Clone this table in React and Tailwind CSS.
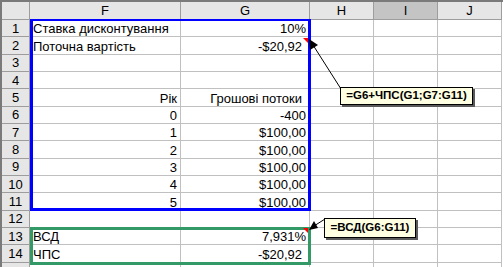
import React from "react";

const COLS = ["F", "G", "H", "I", "J"];

// [F text, F align, G text, G extra right padding]
const ROWS = [
  ["Ставка дисконтування", "left", "10%", false],
  ["Поточна вартість", "left", "-$20,92", true],
  ["", "left", "", false],
  ["", "left", "", false],
  ["Рік", "right", "Грошові потоки", true],
  ["0", "right", "-400", false],
  ["1", "right", "$100,00", false],
  ["2", "right", "$100,00", false],
  ["3", "right", "$100,00", false],
  ["4", "right", "$100,00", false],
  ["5", "right", "$100,00", false],
  ["", "left", "", false],
  ["ВСД", "left", "7,931%", false],
  ["ЧПС", "left", "-$20,92", true],
  ["", "left", "", false],
];

function HeadCell({ children, active }) {
  return (
    <div
      className={`flex items-center justify-center border-r border-b border-[#9d9d9d] ${
        active ? "bg-[#c4c4c4]" : "bg-[#e6e6e6]"
      }`}
    >
      {children}
    </div>
  );
}

function Cell({ children, align = "left", pad = false }) {
  return (
    <div
      className={`flex items-end pb-[1px] overflow-visible whitespace-nowrap border-r border-b border-[#c0c0c0] ${
        align === "right" ? "justify-end" : "justify-start pl-[3px]"
      } ${align === "right" ? (pad ? "pr-[7px]" : "pr-[3px]") : ""}`}
    >
      {children}
    </div>
  );
}

function Callout({ text, className }) {
  return (
    <div
      className={`absolute border border-black bg-[#ffffe1] shadow-[2px_2px_0_#5a5a5a] flex items-center justify-center font-bold text-[11.5px] text-black ${className}`}
    >
      {text}
    </div>
  );
}

export default function App() {
  return (
    <div
      className="relative w-[504px] h-[267px] overflow-hidden bg-white text-black text-[13px] leading-none"
      style={{ fontFamily: '"Liberation Sans", Arial, sans-serif' }}
    >
      <div className="border-l-2 border-t-2 border-[#7a7a7a] grid grid-cols-[28px_151px_129px_64px_64px_64px] grid-rows-[18px_repeat(15,17.35px)] w-[503px]">
        <HeadCell />
        {COLS.map((c) => (
          <HeadCell key={c} active={c === "I"}>
            {c}
          </HeadCell>
        ))}
        {ROWS.map(([f, fAlign, g, gPad], i) => (
          <React.Fragment key={i}>
            <HeadCell>{i < 14 ? i + 1 : ""}</HeadCell>
            <Cell align={fAlign}>{f}</Cell>
            <Cell align="right" pad={gPad}>
              {g}
            </Cell>
            <Cell />
            <Cell />
            <Cell />
          </React.Fragment>
        ))}
      </div>

      {/* range outlines */}
      <div className="absolute left-[30px] top-[19px] w-[281px] h-[192px] border-[3px] border-t-2 border-[#0000ff] pointer-events-none" />
      <div className="absolute left-[30px] top-[227px] w-[281px] h-[38px] border-[3px] border-[#339966] pointer-events-none" />

      {/* comment markers */}
      <div className="absolute left-[303px] top-[38px] w-0 h-0 border-l-[5px] border-l-transparent border-t-[5px] border-t-[#ff0000]" />
      <div className="absolute left-[303px] top-[228px] w-0 h-0 border-l-[5px] border-l-transparent border-t-[5px] border-t-[#ff0000]" />

      {/* arrows */}
      <svg className="absolute inset-0 pointer-events-none" width="504" height="267">
        <line x1="341" y1="89" x2="313" y2="45" stroke="#000" strokeWidth="1" />
        <polygon points="309,39 310,50 318,45" fill="#000" />
        <line x1="325" y1="219" x2="314" y2="226" stroke="#000" strokeWidth="1" />
        <polygon points="309,230 314,221 318,228" fill="#000" />
      </svg>

      <Callout text="=G6+ЧПС(G1;G7:G11)" className="left-[340px] top-[87px] w-[133px] h-[18px]" />
      <Callout text="=ВСД(G6:G11)" className="left-[324px] top-[218px] w-[92px] h-[20px]" />
    </div>
  );
}
